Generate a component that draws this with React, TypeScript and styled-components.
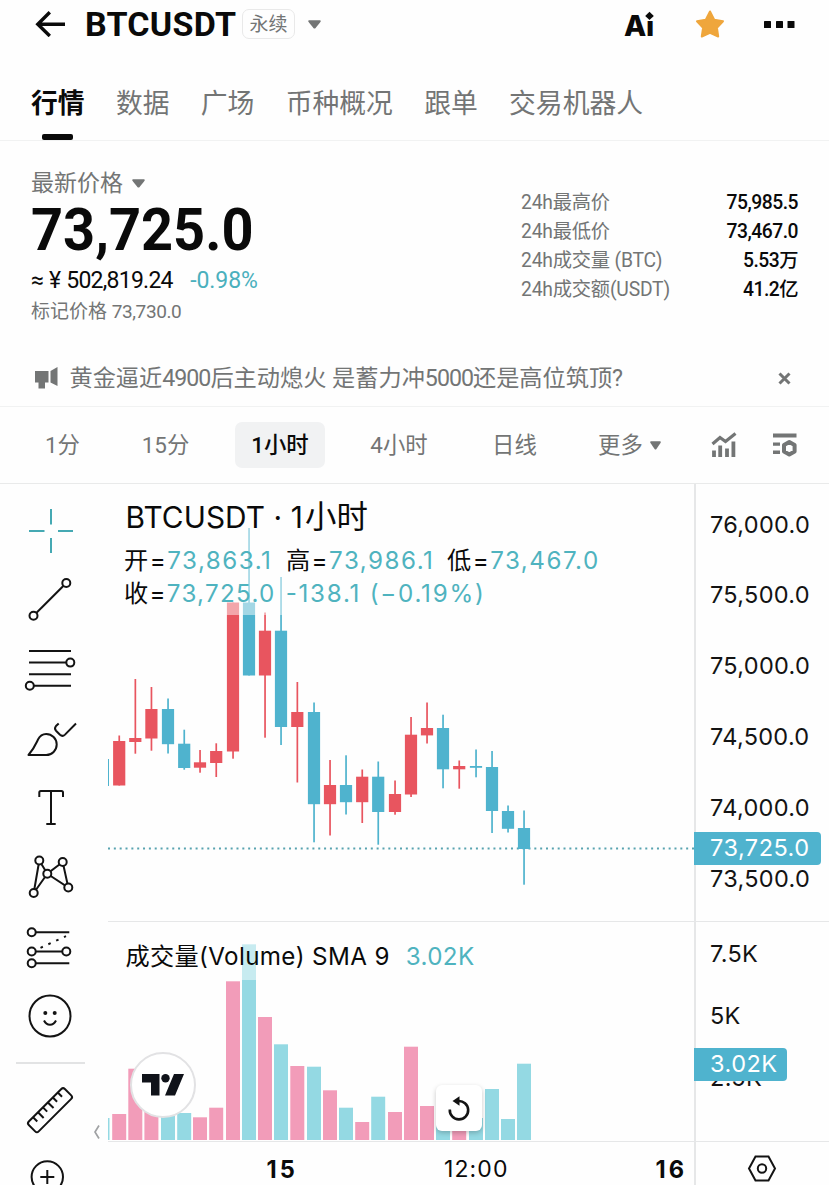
import React from 'react';
import styled, { createGlobalStyle } from 'styled-components';

const Global = createGlobalStyle`
  * { box-sizing: border-box; }
  html, body { margin: 0; padding: 0; background: #fefefe; }
  body { width: 829px; height: 1185px; overflow: hidden; }
`;

const ui = `Roboto, "Noto Sans CJK SC", sans-serif`;
const chartFont = `Inter, "Noto Sans CJK SC", sans-serif`;
const RED = '#e8555f';
const BLUE = '#4fb3ce';
const PINK = '#f29cb9';
const AQUA = '#94d9e3';
const GREY = '#737575';
const LINE = '#e6e7e8';

const Page = styled.main`
  width: 829px;
  height: 1185px;
  overflow: hidden;
  display: flex;
  flex-direction: column;
  background: #fefefe;
  color: #0a0a0a;
  font-family: ${ui};
  white-space: pre;
`;

/* ---------- header ---------- */
const Header = styled.header`
  height: 48px;
  flex: none;
  display: flex;
  align-items: center;
  padding: 0 34px 0 35px;
`;
const Symbol = styled.h1`
  margin: 0 0 0 19px;
  width: 152px;
  font-size: 34px;
  line-height: 48px;
  font-weight: 700;
  letter-spacing: 0.25px;
`;
const Badge = styled.span`
  width: 53px;
  height: 30px;
  margin-left: 5px;
  margin-right: 13px;
  border: 1.5px solid #e9e9e9;
  border-radius: 7px;
  color: ${GREY};
  font-size: 19px;
  line-height: 29px;
  text-align: center;
`;
const Spacer = styled.div`
  flex: 1;
`;
const AiMark = styled.span`
  position: relative;
  width: 30px;
  font: 800 29px/48px ${chartFont};
  letter-spacing: -0.3px;
  padding-top: 3px;
`;
const AiDot = styled.svg`
  position: absolute;
  right: 0;
  top: 12px;
`;
const Star = styled.svg`
  margin: 0 38px 0 40px;
`;

/* ---------- tabs ---------- */
const Tabs = styled.nav`
  height: 93px;
  flex: none;
  display: flex;
  gap: 31.3px;
  padding: 30px 31px 0;
  border-bottom: 1px solid #f1f2f2;
`;
const Tab = styled.div<{ $active?: boolean }>`
  display: flex;
  flex-direction: column;
  align-items: center;
  font-size: 26.8px;
  line-height: 53px;
  font-weight: ${p => (p.$active ? 700 : 400)};
  color: ${p => (p.$active ? '#0a0a0a' : GREY)};
  &::after {
    content: '';
    width: 31px;
    height: 6px;
    margin-top: 3px;
    border-radius: 2px;
    background: ${p => (p.$active ? '#0a0a0a' : 'transparent')};
  }
`;

/* ---------- summary ---------- */
const Summary = styled.section`
  height: 209px;
  flex: none;
  display: flex;
  justify-content: space-between;
  padding: 27px 31px 0;
`;
const Label = styled.div`
  display: flex;
  align-items: center;
  gap: 9px;
  height: 31px;
  font-size: 23px;
  line-height: 32px;
  color: ${GREY};
`;
const Price = styled.div`
  width: 240px;
  height: 62px;
  font-size: 60px;
  line-height: 62px;
  font-weight: 700;
  transform: scaleX(0.932);
  transform-origin: 0 0;
`;
const Fiat = styled.div`
  display: flex;
  gap: 17.5px;
  height: 37px;
  font-size: 23px;
  line-height: 39px;
`;
const FiatValue = styled.span`
  letter-spacing: -0.75px;
  word-spacing: 0.9px;
`;
const Change = styled.span`
  color: #4ab0bd;
  letter-spacing: -0.1px;
`;
const Mark = styled.div`
  font-size: 19px;
  line-height: 27px;
  color: ${GREY};
`;
const Digits = styled.span<{ $s: number }>`
  letter-spacing: ${p => p.$s}px;
`;
const Stats = styled.dl`
  width: 277px;
  margin: 20px 0 0;
`;
const Stat = styled.div`
  display: flex;
  justify-content: space-between;
  height: 29px;
  font-size: 19.3px;
  line-height: 29px;
`;
const StatName = styled.dt`
  color: ${GREY};
  letter-spacing: -0.2px;
`;
const StatValue = styled.dd`
  margin: 0;
  font-weight: 500;
  letter-spacing: -0.5px;
`;

/* ---------- notice ---------- */
const Notice = styled.section`
  height: 57px;
  flex: none;
  display: flex;
  align-items: center;
  padding: 0 38px 0 34px;
  border-bottom: 1px solid #f1f2f2;
  color: ${GREY};
  font-size: 23.2px;
  line-height: 56px;
`;
const NoticeText = styled.span`
  flex: 1;
  margin-left: 10.5px;
`;

/* ---------- intervals ---------- */
const Intervals = styled.nav`
  height: 77px;
  flex: none;
  display: grid;
  grid-template-columns: 103px 103px 126px 112px 119px 111px 77px 45px;
  padding-left: 11px;
  align-items: center;
  justify-items: center;
  border-bottom: 1px solid #e9eaea;
`;
const Interval = styled.div<{ $active?: boolean }>`
  height: 46px;
  display: flex;
  align-items: center;
  gap: 7px;
  padding: 0 16px;
  border-radius: 7px;
  font-size: 22.4px;
  line-height: 47px;
  font-weight: ${p => (p.$active ? 500 : 400)};
  background: ${p => (p.$active ? '#f1f2f3' : 'transparent')};
  color: ${p => (p.$active ? '#0a0a0a' : GREY)};
`;

/* ---------- chart ---------- */
const Workspace = styled.section`
  flex: 1;
  display: grid;
  grid-template-columns: 108px 586px 135px;
  font-family: ${chartFont};
`;
const Tools = styled.aside`
  position: relative;
  display: flex;
  flex-direction: column;
  align-items: center;
  padding: 12.4px 8px 0 0;
`;
const ToolSlot = styled.div`
  height: 69.25px;
  flex: none;
  display: flex;
  align-items: center;
`;
const Divider = styled.div`
  width: 69px;
  height: 2px;
  flex: none;
  margin: 11.5px 0 11px;
  background: #e2e3e4;
`;
const Collapse = styled.svg`
  position: absolute;
  left: 93px;
  top: 640px;
`;
const Plot = styled.div`
  display: flex;
  flex-direction: column;
`;
const Scale = styled.div`
  display: flex;
  flex-direction: column;
  border-left: 2px solid ${LINE};
`;
const PricePane = styled.div`
  position: relative;
  height: 438px;
  flex: none;
  border-bottom: 1.5px solid ${LINE};
`;
const VolumePane = styled.div`
  position: relative;
  height: 220px;
  flex: none;
  border-bottom: 1.5px solid ${LINE};
`;
const Drawing = styled.svg`
  display: block;
`;
const Legend = styled.div<{ $w: number; $h: number; $top: number }>`
  position: absolute;
  left: 8px;
  top: ${p => p.$top}px;
  width: ${p => p.$w}px;
  height: ${p => p.$h}px;
  padding-left: 9px;
  background: rgba(255, 255, 255, 0.48);
`;
const LegendTitle = styled.div`
  height: 47px;
  margin-left: 0.5px;
  font-size: 29.8px;
  line-height: 40px;
  letter-spacing: 0.08px;
`;
const TitleUnit = styled.span`
  font-size: 31.4px;
  margin-left: 2px;
`;
const LegendRow = styled.div<{ $s: number }>`
  display: flex;
  margin-left: -1px;
  font-size: 24.2px;
  line-height: 33px;
  letter-spacing: ${p => p.$s}px;
`;
const Value = styled.span<{ $gap?: number; $s?: number }>`
  color: #4fb3bf;
  margin-right: ${p => p.$gap ?? 0}px;
  ${p => p.$s !== undefined && `letter-spacing: ${p.$s}px;`}
`;
const VolumeName = styled.span`
  margin: 0 16px 0 1.5px;
`;
const Ticks = styled.div<{ $top: number; $row: number }>`
  padding: ${p => p.$top}px 0 0 14px;
  font-size: 23.5px;
  line-height: ${p => p.$row}px;
  letter-spacing: 0.3px;
  color: #131313;
`;
const Tag = styled.div<{ $top: number; $w: number }>`
  position: absolute;
  left: -2px;
  top: ${p => p.$top}px;
  width: ${p => p.$w}px;
  height: 33px;
  padding-left: 16px;
  border-radius: 0 4px 4px 0;
  background: ${BLUE};
  color: #fff;
  font-size: 23.5px;
  line-height: 31px;
  letter-spacing: 0.5px;
`;
const TimeAxis = styled.div`
  flex: 1;
  display: flex;
  align-items: flex-start;
  padding-left: 158.5px;
  font-size: 23px;
  line-height: 55px;
`;
const Time = styled.span<{ $bold?: boolean; $w: number }>`
  width: ${p => p.$w}px;
  flex: none;
  font-size: ${p => (p.$bold ? 23.6 : 23)}px;
  font-weight: ${p => (p.$bold ? 700 : 400)};
  letter-spacing: ${p => (p.$bold ? 3.2 : 1.1)}px;
`;
const SettingsCell = styled.div`
  flex: 1;
  display: flex;
  align-items: flex-start;
  padding: 13px 0 0 51px;
`;
const Logo = styled.div`
  position: absolute;
  left: 22px;
  top: 129.5px;
  width: 66px;
  height: 66px;
  border-radius: 50%;
  border: 2px solid #e2e2e4;
  background: #fff;
  display: flex;
  align-items: center;
  justify-content: center;
`;
const Reset = styled.div`
  position: absolute;
  left: 328px;
  top: 163px;
  width: 46px;
  height: 46px;
  border-radius: 6px;
  background: #fff;
  box-shadow: 0 2px 5px rgba(0, 0, 0, 0.22);
  display: flex;
  align-items: center;
  justify-content: center;
`;

/* x centres of the hourly columns, inside the 586px plot */
const xs = [0, 11.2, 27.3, 43.4, 60, 76.2, 92, 108.2, 125, 141, 157, 173, 189.3, 206, 222, 238, 254.2, 270.2, 287, 303, 319, 335, 351.2, 368, 384, 400, 416];

/* [rising, high, body top, body bottom, low] in page pixels */
const candles: [number, number, number, number, number][] = [
  [0, 759, 760, 785, 786],
  [1, 735.5, 741, 785.5, 785.5],
  [1, 679, 738, 742, 753.7],
  [1, 687, 709, 738.5, 750.7],
  [0, 698.5, 709, 744.2, 753.5],
  [0, 729.7, 743.7, 768, 769.7],
  [1, 750, 762.3, 767.7, 772.7],
  [1, 743.3, 751, 763, 777],
  [1, 602.5, 602.5, 751.5, 758.7],
  [0, 528, 602.5, 675.5, 675.5],
  [1, 612.5, 630.7, 675.5, 737.7],
  [0, 577, 630.7, 727, 745],
  [1, 682, 712, 727, 782.5],
  [0, 702.5, 712, 804.2, 842.3],
  [1, 760, 785, 804.2, 835.5],
  [0, 755.3, 785, 802.2, 814.5],
  [1, 769.5, 776.7, 802.2, 823],
  [0, 761.5, 776.7, 812, 844.7],
  [1, 780.5, 794, 812, 814.7],
  [1, 717, 734.7, 794.5, 797],
  [1, 702.5, 728, 735.4, 743.5],
  [0, 714.7, 728, 769.3, 788.3],
  [1, 760.5, 766, 769.3, 788.7],
  [0, 749.5, 766, 767.8, 777.3],
  [0, 751, 767, 811, 833],
  [0, 805.5, 811, 828.8, 832.5],
  [0, 810.5, 828, 849, 884.7],
];

/* [rising, bar top] in page pixels */
const volumes: [number, number][] = [
  [0, 1118], [1, 1114], [1, 1068.7], [1, 1085], [0, 1108], [0, 1113], [1, 1117.3], [1, 1107.7], [1, 981.3],
  [0, 944.3], [1, 1017], [0, 1044.3], [1, 1066], [0, 1066.7], [1, 1090.3], [0, 1107.7], [1, 1122], [0, 1096.7],
  [1, 1112], [1, 1046.7], [1, 1106], [0, 1120], [1, 1122], [0, 1118], [0, 1089], [0, 1119], [0, 1063.7],
];

const Caret = ({ w = 13, h = 9 }: { w?: number; h?: number }) => (
  <svg width={w} height={h} viewBox="0 0 13 9" preserveAspectRatio="none">
    <path d="M1 0.3H12Q13 0.5 12.6 1.8L7.6 8Q6.5 9.2 5.4 8L0.4 1.8Q0 0.5 1 0.3Z" fill={GREY} />
  </svg>
);

const Glyph = ({ children, color = '#131313' }: { children: React.ReactNode; color?: string }) => (
  <svg width="64" height="64" viewBox="-32 -32 64 64" fill="none" stroke={color} strokeWidth="2">
    {children}
  </svg>
);

const Node = ({ x, y }: { x: number; y: number }) => <circle cx={x} cy={y} r="4" fill="#fefefe" />;

const tools = [
  <Glyph color="#45a9b3"><path d="M1-22V-6.5M1 7V22M-21 0H-5.5M8 0H23" /></Glyph>,
  <Glyph><path d="M16.3-17L-16.5 15.8" /><Node x={16.3} y={-17} /><Node x={-16.5} y={15.8} /></Glyph>,
  <Glyph><path d="M-21-19H21M-21-7.4H20M-21 4.2H21M-20 15.7H21" /><Node x={20.3} y={-7.4} /><Node x={-20.2} y={15.7} /></Glyph>,
  <Glyph>
    <path d="M-21.5 16C-15.5 9-14 4.5-12 0.5C-10-3.5-7-5-3.8-5A10.4 10.4 0 0 1-3.8 16Z" strokeLinejoin="round" />
    <path d="M8.7-15.5L6-13Q4-10.5 6-8.3L10-4.2Q12.5-2 15-4.4L26-15.5" />
  </Glyph>,
  <Glyph><path d="M-10.7-11V-15.5Q-10.7-17-9.2-17H11.5Q13-17 13-15.5V-11M1-17V16M-3.7 16H5.7" /></Glyph>,
  <Glyph>
    <path d="M-10.7-16.5L-16.3 16L-2.7-3.2ZM12.7-15L-2.7-3.2L18.3 10.5Z" />
    <Node x={-10.7} y={-16.5} /><Node x={12.7} y={-15} /><Node x={-2.7} y={-3.2} /><Node x={-16.3} y={16} /><Node x={18.3} y={10.5} />
  </Glyph>,
  <Glyph>
    <path d="M-18.3-14.8H19.3M-18.3 4.5H16.3M-18.3 16.2H19.3" />
    <path d="M-9.5 0.8L16-10.8" strokeDasharray="2.6 6" />
    <Node x={-18.3} y={-14.8} /><Node x={-18.3} y={4.5} /><Node x={16.3} y={4.5} /><Node x={-18.3} y={16.2} />
  </Glyph>,
  <Glyph>
    <circle r="20.5" />
    <circle cx="-4.7" cy="-3" r="2" fill="#131313" stroke="none" />
    <circle cx="4.7" cy="-3" r="2" fill="#131313" stroke="none" />
    <path d="M-6 4.5Q-4 8.7 0 8.7Q4 8.7 6 4.5" />
  </Glyph>,
];

export default function App() {
  return (
    <Page>
      <Global />
      <Header>
        <svg width="31" height="26" viewBox="0 0 31 26" fill="none" stroke="#0a0a0a" strokeWidth="3.4">
          <path d="M30 13.2H3M14.8 1.3L2.8 13.2L14.8 25" />
        </svg>
        <Symbol>BTCUSDT</Symbol>
        <Badge>永续</Badge>
        <Caret />
        <Spacer />
        <AiMark>
          Ai
          <AiDot width="9" height="10" viewBox="0 0 9 10">
            <rect width="9" height="10" fill="#fefefe" />
            <path d="M4.5 0.8L8.8 4.9L4.5 9L0.2 4.9Z" fill="#0a0a0a" />
          </AiDot>
        </AiMark>
        <Star width="32" height="32" viewBox="0 0 32 32">
          <path
            d="M16 3.5L20.2 11.7L29 13.2L22.9 19.7L24.2 28.5L16 24.8L7.8 28.5L9.1 19.7L3 13.2L11.8 11.7Z"
            fill="#efa63c" stroke="#efa63c" strokeWidth="2" strokeLinejoin="round"
          />
        </Star>
        <svg width="31" height="7" viewBox="0 0 31 7" fill="#0a0a0a">
          <rect width="7" height="7" rx="0.6" />
          <rect x="12" width="7" height="7" rx="0.6" />
          <rect x="23.5" width="7" height="7" rx="0.6" />
        </svg>
      </Header>

      <Tabs>
        <Tab $active>行情</Tab>
        <Tab>数据</Tab>
        <Tab>广场</Tab>
        <Tab>币种概况</Tab>
        <Tab>跟单</Tab>
        <Tab>交易机器人</Tab>
      </Tabs>

      <Summary>
        <div>
          <Label>最新价格<Caret /></Label>
          <Price>73,725.0</Price>
          <Fiat><FiatValue>≈ ¥ 502,819.24</FiatValue><Change>-0.98%</Change></Fiat>
          <Mark>标记价格 <Digits $s={-0.4}>73,730.0</Digits></Mark>
        </div>
        <Stats>
          <Stat><StatName>24h最高价</StatName><StatValue>75,985.5</StatValue></Stat>
          <Stat><StatName>24h最低价</StatName><StatValue>73,467.0</StatValue></Stat>
          <Stat><StatName>24h成交量 (BTC)</StatName><StatValue>5.53万</StatValue></Stat>
          <Stat><StatName>24h成交额(USDT)</StatName><StatValue>41.2亿</StatValue></Stat>
        </Stats>
      </Summary>

      <Notice>
        <svg width="25" height="24" viewBox="0 0 25 24" fill={GREY}>
          <path d="M1 5H14.5V16.5H11V22.5H4.5V16.5H1ZM16.5 5L23.5 1V20L16.5 16.5Z" />
        </svg>
        <NoticeText>
          黄金逼近<Digits $s={-1}>4900</Digits>后主动熄火 是蓄力冲<Digits $s={-1}>5000</Digits>还是高位筑顶?
        </NoticeText>
        <svg width="13" height="13" viewBox="0 0 13 13" stroke={GREY} strokeWidth="3">
          <path d="M1.5 1.5L11.5 11.5M11.5 1.5L1.5 11.5" />
        </svg>
      </Notice>

      <Intervals>
        <Interval>1分</Interval>
        <Interval>15分</Interval>
        <Interval $active>1小时</Interval>
        <Interval>4小时</Interval>
        <Interval>日线</Interval>
        <Interval>更多<Caret w={11} h={9} /></Interval>
        <svg width="26" height="26" viewBox="0 0 26 26" fill="none" stroke={GREY}>
          <path d="M1.5 12L9 5.5L14.5 9.5L24.5 1.5" strokeWidth="3.2" />
          <path d="M3 25V18.5M9.2 25V13.5M16 25V16.5M22.4 25V9.5" strokeWidth="3.8" />
        </svg>
        <svg width="26" height="26" viewBox="0 0 26 26" fill={GREY}>
          <path d="M1 1.5H24.5V5.5H1ZM1 10.5H8V13.8H1ZM1 18.5H8V22H1Z" />
          <path d="M17.3 10L22.6 13V19.4L17.3 22.5L12 19.4V13Z" fill="none" stroke={GREY} strokeWidth="4" strokeLinejoin="round" />
        </svg>
      </Intervals>

      <Workspace>
        <Tools>
          {tools.map((t, i) => <ToolSlot key={i}>{t}</ToolSlot>)}
          <Divider />
          <ToolSlot>
            <Glyph>
              <g transform="translate(0 0.2) rotate(-45)">
                <rect x="-25.5" y="-7" width="51" height="14" rx="2.5" />
                <path d="M-17-7V-1M-10-7V1M-3-7V-1M4-7V1M11-7V-1M18-7V-1" />
              </g>
            </Glyph>
          </ToolSlot>
          <ToolSlot>
            <Glyph><circle cx="-2.7" cy="-2" r="15.7" /><path d="M-9.7-2H4.3M-2.7-9V5" /></Glyph>
          </ToolSlot>
          <Collapse width="8" height="16" viewBox="0 0 8 16" fill="none" stroke="#a0a2a4" strokeWidth="1.7">
            <path d="M6 1.5L2 8L6 14.5" />
          </Collapse>
        </Tools>

        <Plot>
          <PricePane>
            <Drawing width="586" height="436" viewBox="0 484 586 436">
              <path d="M0 848.5H586" stroke="#58a3b0" strokeWidth="2" strokeDasharray="2 3.84" />
              {candles.map(([up, hi, top, bottom, lo], i) => {
                const c = up ? RED : BLUE;
                if (i === 0) return <rect key={i} x="0" y={hi} width="1" height={lo - hi} fill={c} />;
                return (
                  <g key={i} fill={c}>
                    <rect x={xs[i] - 0.8} y={hi} width="1.7" height={lo - hi} />
                    <rect x={xs[i] - 6.1} y={top} width="12.2" height={bottom - top} />
                  </g>
                );
              })}
            </Drawing>
            <Legend $top={13} $w={560} $h={118}>
              <LegendTitle>BTCUSDT · 1<TitleUnit>小时</TitleUnit></LegendTitle>
              <LegendRow $s={1.5}>
                开=<Value $gap={13.5}>73,863.1</Value>高=<Value $gap={12.5}>73,986.1</Value>低=<Value>73,467.0</Value>
              </LegendRow>
              <LegendRow $s={1.3}>
                收=<Value $gap={10}>73,725.0</Value><Value $s={1.75}>-138.1 (−0.19%)</Value>
              </LegendRow>
            </Legend>
          </PricePane>
          <VolumePane>
            <Drawing width="586" height="218" viewBox="0 922 586 218">
              {volumes.map(([up, top], i) => (
                <rect key={i} x={i === 0 ? 0 : xs[i] - 7} y={top} width={i === 0 ? 1.5 : 14} height={1140 - top} fill={up ? PINK : AQUA} />
              ))}
            </Drawing>
            <Legend $top={18} $w={368} $h={40}>
              <LegendRow $s={0.35}><VolumeName>成交量(Volume) SMA 9</VolumeName><Value>3.02K</Value></LegendRow>
            </Legend>
            <Logo>
              <svg width="42" height="22" viewBox="0 0 42 22" fill="#10131a">
                <path d="M0 0H17.5V21.5H9V8.5H0ZM32 0H42L33 21.5H23Z" />
                <circle cx="23.5" cy="4.3" r="4.2" />
              </svg>
            </Logo>
            <Reset>
              <svg width="24" height="26" viewBox="0 0 24 26">
                <path d="M11 6A9.2 9.2 0 1 1 2.8 14.5" fill="none" stroke="#131313" strokeWidth="2.6" />
                <path d="M5.5 6L12.5 1.2V10.8Z" fill="#131313" />
              </svg>
            </Reset>
          </VolumePane>
          <TimeAxis>
            <Time $bold $w={177.5}>15</Time>
            <Time $w={211.5}>12:00</Time>
            <Time $bold $w={38}>16</Time>
          </TimeAxis>
        </Plot>

        <Scale>
          <PricePane>
            <Ticks $top={5.6} $row={70.8}>
              <div>76,000.0</div>
              <div>75,500.0</div>
              <div>75,000.0</div>
              <div>74,500.0</div>
              <div>74,000.0</div>
              <div>73,500.0</div>
            </Ticks>
            <Tag $top={348} $w={127}>73,725.0</Tag>
          </PricePane>
          <VolumePane>
            <Ticks $top={0.5} $row={62.2}>
              <div>7.5K</div>
              <div>5K</div>
              <div>2.5K</div>
            </Ticks>
            <Tag $top={125.5} $w={93}>3.02K</Tag>
          </VolumePane>
          <SettingsCell>
            <svg width="30" height="27" viewBox="0 0 30 27" fill="none" stroke="#131313" strokeWidth="2">
              <path d="M8.5 1.5H21.5L28 13.5L21.5 25.5H8.5L2 13.5Z" />
              <circle cx="15" cy="13.5" r="4.2" />
            </svg>
          </SettingsCell>
        </Scale>
      </Workspace>
    </Page>
  );
}
